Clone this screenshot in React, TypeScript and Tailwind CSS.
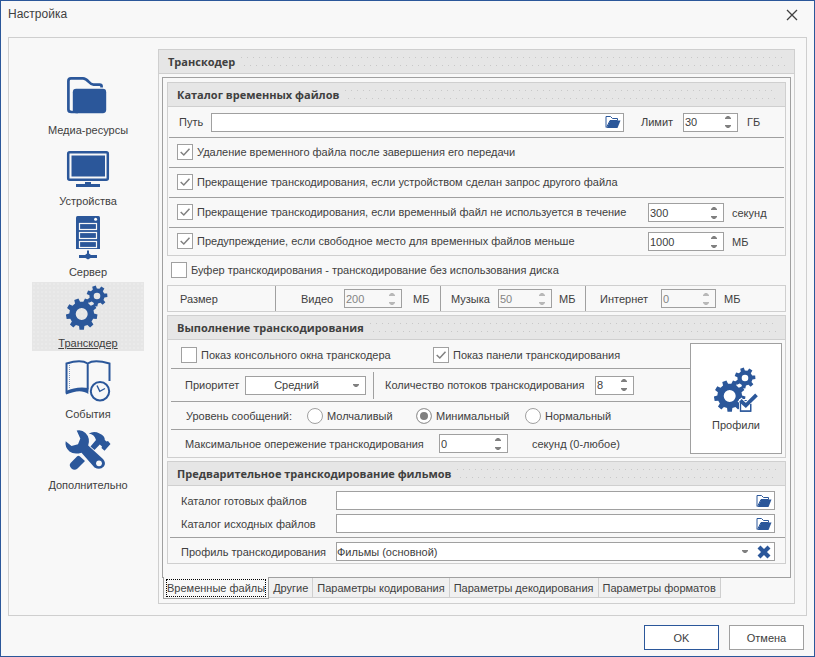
import { useId, useState } from "react";
import type { ReactNode } from "react";

const BLUE = "#2b579a";

/* ---------- icons ---------- */

function gearPath(cx: number, cy: number, teeth: number, outer: number, root: number, hole: number, start: number) {
  const step = (Math.PI * 2) / teeth;
  const first = (start * Math.PI) / 180;
  const at = (r: number, a: number) => `${(cx + r * Math.cos(a)).toFixed(2)} ${(cy + r * Math.sin(a)).toFixed(2)}`;
  const points: string[] = [];
  for (let i = 0; i < teeth; i++) {
    const a = first + i * step;
    points.push(at(root, a - step * 0.31), at(outer, a - step * 0.2), at(outer, a + step * 0.2), at(root, a + step * 0.31));
  }
  return (
    `M${points.join("L")}Z` +
    `M${cx - hole} ${cy}a${hole} ${hole} 0 1 0 ${hole * 2} 0a${hole} ${hole} 0 1 0 ${-hole * 2} 0Z`
  );
}

const BIG_GEAR = gearPath(17.7, 30, 9, 15.8, 12.4, 6, 90);
const SMALL_GEAR = gearPath(33, 12, 7, 10.5, 7.6, 3.3, -107);

function Icon48({ children }: { children: ReactNode }) {
  return (
    <svg viewBox="0 0 48 48" className="size-12 shrink-0" fill={BLUE} aria-hidden="true">
      {children}
    </svg>
  );
}

const MediaIcon = () => (
  <Icon48>
    <path
      d="M37.6 16.5V15.5Q37.6 13.6 35.6 13.6H29.5C25 13.6 24 7.4 19 7.4H7Q4.4 7.4 4.4 10V38.5Q4.4 41 7.5 41H14"
      fill="none"
      stroke={BLUE}
      strokeWidth="2.7"
    />
    <rect x="8.8" y="17.8" width="33.4" height="24.4" rx="3.4" />
  </Icon48>
);

const DevicesIcon = () => (
  <Icon48>
    <rect x="4.2" y="10.2" width="39.6" height="27.6" rx="1.5" fill="none" stroke={BLUE} strokeWidth="2.5" />
    <rect x="7.5" y="13.5" width="33.5" height="21" />
    <path d="M21 40h6v2h9v3H12v-3h9z" />
  </Icon48>
);

const ServerIcon = () => (
  <Icon48>
    <path d="M12 4.5Q12 3 13.5 3h21Q36 3 36 4.5V36H12z" />
    <circle cx="31.6" cy="6.2" r="1.5" fill="#fff" />
    <g fill="none" stroke="#f8f8f8" strokeWidth="1.2">
      <rect x="15.500" y="10.500" width="17" height="6" />
      <rect x="15.500" y="19.500" width="17" height="6" />
      <rect x="15.500" y="28.500" width="17" height="6" />
    </g>
    <path d="M23 37.5h2v3l2 1.500h6v3h-6.500l-2.500 1.500l-2.500-1.500H15v-3h6l2-1.500z" />
  </Icon48>
);

const GearsIcon = () => (
  <Icon48>
    <path d={BIG_GEAR} fillRule="evenodd" />
    <path d={SMALL_GEAR} fillRule="evenodd" />
  </Icon48>
);

const EventsIcon = () => (
  <Icon48>
    <path
      d="M2.500 38.500V8.500Q17 4 23.700 8.500Q30 4 45.500 8.500V26M23.700 8.500V37"
      fill="none"
      stroke={BLUE}
      strokeWidth="2"
    />
    <path d="M5.500 8V34" stroke={BLUE} strokeWidth="0.600" strokeDasharray="1 1" />
    <path d="M2 36C9 33 16 31.500 24.500 33V39C18 34.500 11 36 2 39.500Z" />
    <circle cx="36" cy="36.300" r="11.500" fill="#f8f8f8" />
    <circle cx="36" cy="36.300" r="9.200" fill="none" stroke={BLUE} strokeWidth="2" />
    <path d="M33 30.500L35.800 36.300L41 33.500" fill="none" stroke={BLUE} strokeWidth="1.400" />
  </Icon48>
);

const ToolsIcon = () => (
  <Icon48>
    <path d="M12.700 4.600Q18 3.500 21.500 7Q26.500 12 24.200 19.500L39 33Q42.500 37 39.800 40.600Q36 44.500 30.500 41.500L17.500 26.700Q10 29 5.500 25.500Q0.500 21 1.700 15.300L7.500 20L14 18.200L16.300 12.500Z" />
    <circle cx="35" cy="37.300" r="2.900" fill="#f8f8f8" />
    <path d="M13.200 30.300Q14.500 29 15.700 30.300L21 35L13.500 42.500Q10.500 45 7.500 42.500Q4.500 39.200 6.600 37Z" />
    <path d="M24.800 7.600Q30 4.500 35.500 7.500Q41 9.500 40.800 14L42.500 15.500L44 15L46.500 18L40.500 24.800L37.500 22L38 20.500L35.800 18.500L30.500 24L26.500 20.500L32 14Q30.500 8.500 24.800 7.600Z" />
  </Icon48>
);

const ProfilesIcon = () => (
  <Icon48>
    <path d={BIG_GEAR} fillRule="evenodd" />
    <path d={SMALL_GEAR} fillRule="evenodd" />
    <path d="M27 33h14v14H27z" fill="#fff" />
    <path d="M28.500 34.700h10.200v10.500H28.500z" fill="none" stroke={BLUE} strokeWidth="1.200" />
    <path d="M27.500 33.500L33.800 39.500L44.500 28.500" fill="none" stroke="#fff" strokeWidth="5.500" />
    <path d="M28.500 37V45.200H38.700V38" fill="none" stroke={BLUE} strokeWidth="1.200" />
    <path d="M28.300 34.500L33.800 39.500L44.500 28.800" fill="none" stroke={BLUE} strokeWidth="3.800" />
  </Icon48>
);

const FolderIcon = () => (
  <svg viewBox="0 0 16 14" className="h-[14px] w-4" aria-hidden="true">
    <path d="M1 12.500V1.500H5.500L7.500 3.500H12.500V5.500H5L1.500 12.500" fill="none" stroke={BLUE} />
    <path d="M5.200 5.500H15.500L12.500 13H1.800z" fill={BLUE} />
  </svg>
);

const CrossIcon = () => (
  <svg viewBox="0 0 14 14" className="size-[14px]" aria-hidden="true">
    <path d="M2 2L12 12M12 2L2 12" stroke={BLUE} strokeWidth="4.200" />
  </svg>
);

const Caret = ({ up = false }: { up?: boolean }) => (
  <svg viewBox="0 0 6 3" className="h-[3px] w-[6px]" fill="currentColor" aria-hidden="true">
    <path d={up ? "M0 3V2L2 0H4L6 2V3z" : "M0 0V1L2 3H4L6 1V0z"} />
  </svg>
);

/* ---------- controls ---------- */

function Check({ label, checked = false }: { label: string; checked?: boolean }) {
  return (
    <label className="flex items-center gap-1">
      <span className="grid size-4 shrink-0 place-items-center *:col-start-1 *:row-start-1">
        <input
          type="checkbox"
          defaultChecked={checked}
          className="peer size-4 appearance-none border border-[#a0a0a0] bg-white"
        />
        <svg viewBox="0 0 16 16" className="pointer-events-none hidden size-4 peer-checked:block" aria-hidden="true">
          <path d="M3.700 8L6.800 11L12.500 4.700" fill="none" stroke="#808080" strokeWidth="1.500" />
        </svg>
      </span>
      <span>{label}</span>
    </label>
  );
}

function Radio({ label, checked = false }: { label: string; checked?: boolean }) {
  return (
    <label className="flex w-[109px] items-center gap-1">
      <input
        type="radio"
        name="messages"
        defaultChecked={checked}
        className="size-4 shrink-0 appearance-none rounded-full border border-[#a0a0a0] bg-white checked:bg-[#808080] checked:shadow-[inset_0_0_0_3px_#fff]"
      />
      <span>{label}</span>
    </label>
  );
}

function Spin({
  id,
  label,
  value,
  width,
  disabled = false,
}: {
  id?: string;
  label?: string;
  value: number;
  width: string;
  disabled?: boolean;
}) {
  const [current, setCurrent] = useState(value);
  return (
    <span
      className={`flex h-[19px] shrink-0 border border-[#a0a0a0] ${width} ${
        disabled ? "bg-[#f8f8f8] text-[#b8b8b8]" : "bg-white text-[#808080]"
      }`}
    >
      <input
        id={id}
        aria-label={label}
        type="text"
        inputMode="numeric"
        disabled={disabled}
        value={current}
        onChange={(e) => setCurrent(Number(e.target.value) || 0)}
        className="w-0 min-w-0 flex-1 bg-transparent pl-px text-[#404040] outline-none disabled:text-[#848484]"
      />
      <span className="flex w-[18px] flex-col items-center justify-center gap-[6px]">
        <button type="button" aria-label="Больше" disabled={disabled} onClick={() => setCurrent(current + 1)}>
          <Caret up />
        </button>
        <button type="button" aria-label="Меньше" disabled={disabled} onClick={() => setCurrent(current - 1)}>
          <Caret />
        </button>
      </span>
    </span>
  );
}

function PathField({ id }: { id: string }) {
  return (
    <span className="flex h-[19px] flex-1 items-center border border-[#a0a0a0] bg-white pr-[2px]">
      <input id={id} type="text" className="h-full min-w-0 flex-1 bg-transparent px-px outline-none" />
      <button type="button" aria-label="Обзор">
        <FolderIcon />
      </button>
    </span>
  );
}

function Header({ children }: { children: ReactNode }) {
  return (
    <div className="flex h-6 items-center gap-[6px] border-b border-[#cfcfcf] bg-[#e6e6e6] px-[9px]">
      <h2 className="font-['Open_Sans','Noto_Sans',sans-serif] font-bold">{children}</h2>
      <span className="flex flex-1 flex-col gap-[7px]">
        <span className="h-px bg-[linear-gradient(to_right,#c8c8c8_1px,transparent_1px)] bg-[length:6px_1px]" />
        <span className="ml-[3px] h-px bg-[linear-gradient(to_right,#c8c8c8_1px,transparent_1px)] bg-[length:6px_1px]" />
      </span>
    </div>
  );
}

function Group({ title, children }: { title: string; children: ReactNode }) {
  return (
    <section className="border border-[#cfcfcf]">
      <Header>{title}</Header>
      {children}
    </section>
  );
}

/* ---------- sections ---------- */

const NAV = [
  { label: "Медиа-ресурсы", Icon: MediaIcon },
  { label: "Устройства", Icon: DevicesIcon },
  { label: "Сервер", Icon: ServerIcon },
  { label: "Транскодер", Icon: GearsIcon },
  { label: "События", Icon: EventsIcon },
  { label: "Дополнительно", Icon: ToolsIcon },
];

function Sidebar() {
  return (
    <nav className="flex w-[149px] shrink-0 flex-col gap-[2px] pt-5 pr-[14px] pl-[23px]">
      {NAV.map(({ label, Icon }) => {
        const active = label === "Транскодер";
        return (
          <button
            key={label}
            type="button"
            className={`flex h-[69px] flex-col items-center gap-1 pt-[2px] ${
              active
                ? "bg-[#e6e6e6] bg-[radial-gradient(#eaeaea_1px,transparent_1px)] bg-[length:4px_4px] underline"
                : ""
            }`}
          >
            <Icon />
            {label}
          </button>
        );
      })}
    </nav>
  );
}

function TempFiles() {
  const id = useId();
  const row = "mx-px flex h-[30px] items-center border-b border-[#a0a0a0] pb-px pl-2";
  return (
    <Group title="Каталог временных файлов">
      <div className="mx-px flex h-[31px] items-center border-b border-[#a0a0a0] pl-[10px]">
        <label htmlFor={`${id}path`} className="w-8">
          Путь
        </label>
        <PathField id={`${id}path`} />
        <label htmlFor={`${id}limit`} className="w-[59px] pl-[17px]">
          Лимит
        </label>
        <Spin id={`${id}limit`} value={30} width="w-[55px]" />
        <span className="w-[46px] pl-[9px]">ГБ</span>
      </div>
      <div className={row}>
        <Check label="Удаление временного файла после завершения его передачи" checked />
      </div>
      <div className={row}>
        <Check label="Прекращение транскодирования, если устройством сделан запрос другого файла" checked />
      </div>
      <div className={row}>
        <Check label="Прекращение транскодирования, если временный файл не используется в течение" checked />
        <span className="ml-auto flex items-center pt-px">
          <Spin label="Секунд" value={300} width="w-[76px]" />
          <span className="w-[60px] pl-2">секунд</span>
        </span>
      </div>
      <div className="mx-px flex h-[27px] items-center pb-px pl-2">
        <Check label="Предупреждение, если свободное место для временных файлов меньше" checked />
        <span className="ml-auto flex items-center pt-px">
          <Spin label="МБ" value={1000} width="w-[76px]" />
          <span className="w-[60px] pl-2">МБ</span>
        </span>
      </div>
    </Group>
  );
}

function BufferSizes() {
  const id = useId();
  return (
    <>
      <div className="flex h-[29px] items-center pb-px pl-1">
        <Check label="Буфер транскодирования - транскодирование без использования диска" />
      </div>
      <div className="mb-[3px] flex h-[27px] items-stretch border border-[#cfcfcf] *:flex *:items-center">
        <span className="w-[108px] border-r border-[#a0a0a0] pl-3">Размер</span>
        <div className="w-[165px] border-r border-[#a0a0a0] pl-[25px]">
          <label htmlFor={`${id}v`} className="w-[43px]">
            Видео
          </label>
          <Spin id={`${id}v`} value={200} width="w-[58px]" disabled />
          <span className="pl-[11px]">МБ</span>
        </div>
        <div className="w-[145px] border-r border-[#a0a0a0] pl-[10px]">
          <label htmlFor={`${id}m`} className="w-[47px]">
            Музыка
          </label>
          <Spin id={`${id}m`} value={50} width="w-[54px]" disabled />
          <span className="pl-[7px]">МБ</span>
        </div>
        <div className="pl-[14px]">
          <label htmlFor={`${id}i`} className="w-[61px]">
            Интернет
          </label>
          <Spin id={`${id}i`} value={0} width="w-[55px]" disabled />
          <span className="pl-2">МБ</span>
        </div>
      </div>
    </>
  );
}

function Execution() {
  const id = useId();
  return (
    <Group title="Выполнение транскодирования">
      <div className="flex pr-[3px] pl-[3px]">
        <div className="flex-1">
          <div className="flex h-[29px] items-center border-b border-[#a0a0a0] pt-[2px] pl-[10px]">
            <div className="w-[252px]">
              <Check label="Показ консольного окна транскодера" />
            </div>
            <Check label="Показ панели транскодирования" checked />
          </div>
          <div className="flex h-[33px] items-center border-b border-[#a0a0a0] pl-[14px]">
            <label htmlFor={`${id}p`} className="w-[60px]">
              Приоритет
            </label>
            <span className="flex h-[19px] w-[121px] items-center border border-[#a0a0a0] bg-white pr-[6px] text-[#808080]">
              <select
                id={`${id}p`}
                className="h-full min-w-0 flex-1 appearance-none pr-[6px] text-[#404040] outline-none [text-align-last:center]"
              >
                <option>Средний</option>
              </select>
              <Caret />
            </span>
            <span className="ml-[7px] h-[27px] w-px bg-[#a0a0a0]" />
            <label htmlFor={`${id}t`} className="w-[221px] pl-[11px] whitespace-nowrap">
              Количество потоков транскодирования
            </label>
            <Spin id={`${id}t`} value={8} width="w-[39px]" />
          </div>
          <div role="radiogroup" aria-labelledby={`${id}l`} className="flex h-7 items-center border-b border-[#a0a0a0] pl-[15px]">
            <span id={`${id}l`} className="w-[121px]">
              Уровень сообщений:
            </span>
            <Radio label="Молчаливый" />
            <Radio label="Минимальный" checked />
            <Radio label="Нормальный" />
          </div>
          <div className="flex h-[27px] items-center pl-[14px]">
            <label htmlFor={`${id}a`} className="w-[254px]">
              Максимальное опережение транскодирования
            </label>
            <Spin id={`${id}a`} value={0} width="w-[69px]" />
            <span className="pl-6">секунд (0-любое)</span>
          </div>
        </div>
        <button
          type="button"
          className="my-[3px] flex w-[92px] flex-col items-center justify-center gap-1 border border-[#a0a0a0] bg-white pt-px"
        >
          <ProfilesIcon />
          Профили
        </button>
      </div>
    </Group>
  );
}

function Preliminary() {
  const id = useId();
  return (
    <Group title="Предварительное транскодирование фильмов">
      <div className="ml-[2px] flex flex-col gap-1 border-b border-[#a0a0a0] pt-[5px] pr-[10px] pb-1 pl-[11px]">
        <div className="flex items-center">
          <label htmlFor={`${id}r`} className="w-[155px]">
            Каталог готовых файлов
          </label>
          <PathField id={`${id}r`} />
        </div>
        <div className="flex items-center">
          <label htmlFor={`${id}s`} className="w-[155px]">
            Каталог исходных файлов
          </label>
          <PathField id={`${id}s`} />
        </div>
      </div>
      <div className="ml-[2px] flex items-center pt-1 pr-[10px] pb-[2px] pl-[11px]">
        <label htmlFor={`${id}f`} className="w-[155px]">
          Профиль транскодирования
        </label>
        <span className="flex h-[19px] flex-1 items-center border border-[#a0a0a0] bg-white pr-[3px] text-[#808080]">
          <select id={`${id}f`} className="h-full min-w-0 flex-1 appearance-none text-[#404040] outline-none">
            <option>Фильмы (основной)</option>
          </select>
          <Caret />
          <button type="button" aria-label="Очистить" className="ml-[9px]">
            <CrossIcon />
          </button>
        </span>
      </div>
    </Group>
  );
}

const TABS = ["Другие", "Параметры кодирования", "Параметры декодирования", "Параметры форматов"];

function Tabs() {
  return (
    <div role="tablist" className="mx-[3px] mb-1 flex items-start pl-px">
      <button
        type="button"
        role="tab"
        aria-selected="true"
        className="-mt-px h-[22px] border border-t-0 border-[#a0a0a0] bg-[#f8f8f8] px-[2px] pt-[2px] pb-px"
      >
        <span className="flex h-[18px] items-center border border-dotted border-black">Временные файлы</span>
      </button>
      {TABS.map((tab) => (
        <button
          key={tab}
          type="button"
          role="tab"
          aria-selected="false"
          className="h-5 border-r border-b border-[#cfcfcf] bg-[#f0f0f0] px-1"
        >
          {tab}
        </button>
      ))}
    </div>
  );
}

export default function App() {
  return (
    <div className="flex min-h-screen flex-col border border-[#2b579a] bg-[#f8f8f8] font-['Liberation_Sans','Noto_Sans',sans-serif] text-[11px] leading-[14px] text-[#404040]">
      <header className="flex h-9 items-start justify-between pt-[6px] pr-4 pl-[7px]">
        <h1 className="text-[12px]">Настройка</h1>
        <button type="button" aria-label="Закрыть" className="pt-[2px]">
          <svg viewBox="0 0 12 12" className="size-3" aria-hidden="true">
            <path d="M1 1L11 11M11 1L1 11" stroke="#404040" strokeWidth="1.300" />
          </svg>
        </button>
      </header>

      <div className="mx-[7px] flex flex-1 border border-[#cfcfcf] py-[11px] pr-[11px]">
        <Sidebar />
        <main className="flex flex-1 flex-col border border-[#cfcfcf]">
          <Header>Транскодер</Header>
          <div className="mx-[3px] mt-[3px] flex-1 border border-[#a0a0a0] p-1">
            <TempFiles />
            <BufferSizes />
            <Execution />
            <div className="h-[3px]" />
            <Preliminary />
          </div>
          <Tabs />
        </main>
      </div>

      <footer className="flex justify-end gap-[10px] pt-[9px] pr-[10px] pb-[6px]">
        <button type="button" className="h-[25px] w-[75px] border border-[#2b579a] bg-white">
          OK
        </button>
        <button type="button" className="h-[25px] w-[75px] border border-[#a0a0a0] bg-white">
          Отмена
        </button>
      </footer>
    </div>
  );
}
